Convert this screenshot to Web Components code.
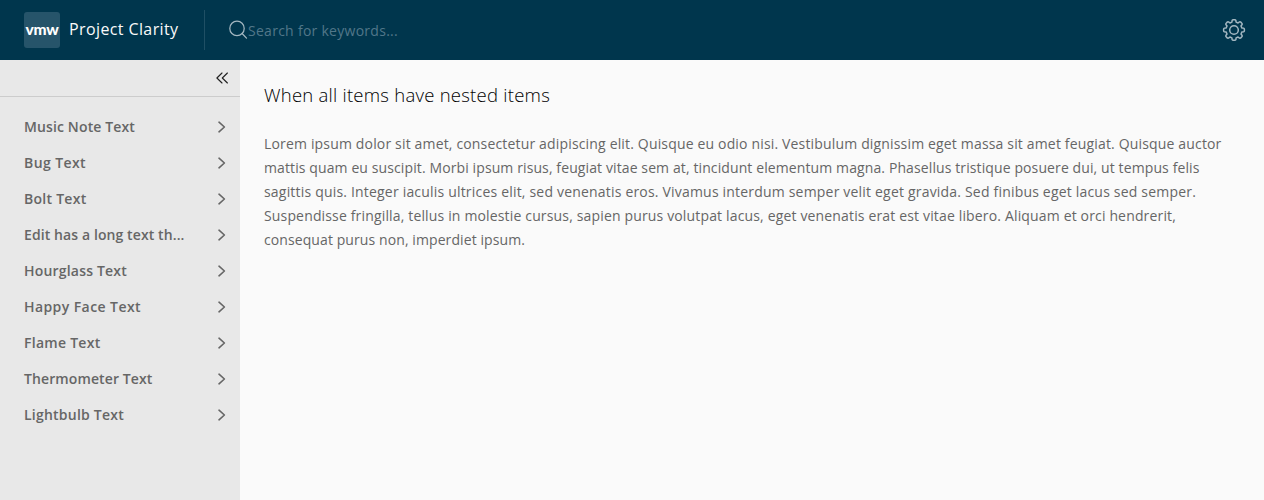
<!DOCTYPE html>
<html lang="en"><head><meta charset="utf-8"><title>Project Clarity</title>
<style>html,body{margin:0;height:100%;overflow:hidden}body{font-family:"Open Sans",sans-serif}</style></head>
<body>
<clr-shell></clr-shell>
<script>
const define=(name,html,setup)=>customElements.define(name,class extends HTMLElement{
  connectedCallback(){if(this.shadowRoot)return;this.attachShadow({mode:'open'}).innerHTML=html;if(setup)setup.call(this,this.shadowRoot);}
});
/* One line of text, tracked so that it spans a set measure. */
define('fit-line',`<style>:host{display:block;white-space:pre}span{display:inline-block}</style><span><slot></slot></span>`,function(root){
  const s=root.querySelector('span'),n=this.textContent.length;
  s.style.letterSpacing=((+this.getAttribute('measure')-s.getBoundingClientRect().width)/n)+'px';
});
define('clr-header',`<style>
:host{display:flex;height:60px;background:#00364d;color:#fafafa;align-items:center;flex:none}
.brand{display:flex;align-items:center;width:204px;box-sizing:border-box;padding-left:24px;gap:9px}
.logo{width:36px;height:36px;border-radius:3px;background:#26546a;display:flex;align-items:center;justify-content:center;font:900 15.5px/36px Lato,sans-serif;color:#fff}
.logo fit-line{margin-top:-2px}
.title{font-size:16px;line-height:24px;margin-top:-2px}
.search{display:flex;align-items:center;flex:1;border-left:1px solid #1f4f64;height:40px;padding-left:23px}
.search svg{margin-right:-1px}
.search fit-line{font-size:14px;line-height:24px;color:#527789;margin-top:2px}
.cog{margin-right:18px}svg{display:block;flex:none}
</style>
<div class="brand"><div class="logo"><fit-line measure="33">vmw</fit-line></div><fit-line class="title" measure="109.5">Project Clarity</fit-line></div>
<div class="search"><svg width="21" height="24" viewBox="0 0 21 24" fill="none" stroke="#a3b7c1" stroke-width="1.25"><circle cx="9" cy="10.4" r="7.2"/><path d="M14.1 15.5l4.4 4.6" stroke-linecap="round"/></svg><fit-line measure="150">Search for keywords...</fit-line></div>
<svg class="cog" width="24" height="24" viewBox="-12 -12 24 24" fill="none" stroke="#a3b7c1" stroke-width="1.5"><circle r="4.3"/><path id="cog" stroke-linejoin="round"/></svg>`,function(root){
  /* Eight rounded teeth joined by short valleys. */
  let d='';
  for(let i=0;i<8;i++){
    const p=(r,deg)=>{const a=(i*45+deg)*Math.PI/180;return (r*Math.sin(a)).toFixed(2)+' '+(-r*Math.cos(a)).toFixed(2)};
    d+=(i?'L':'M')+p(8.1,-15)+'L'+p(9.8,-11)+'Q'+p(10.5,-8)+' '+p(10.4,-4)+'L'+p(10.4,4)+'Q'+p(10.5,8)+' '+p(9.8,11)+'L'+p(8.1,15);
  }
  root.getElementById('cog').setAttribute('d',d+'Z');
});
define('nav-item',`<style>:host{display:flex;height:36px;align-items:center;justify-content:space-between;padding:0 14px 0 24px;font-size:14px;font-weight:600;line-height:36px;color:#666}</style>
<slot></slot><svg width="9" height="12" viewBox="0 0 9 12" fill="none" stroke="#666" stroke-width="1.6"><path d="M2 1.2L7.4 6 2 10.8" stroke-linecap="round" stroke-linejoin="round"/></svg>`);
define('clr-sidenav',`<style>
:host{display:block;width:240px;background:#e8e8e8;flex:none}
.toggle{height:36px;border-bottom:1px solid #ccc;display:flex;align-items:center;justify-content:flex-end;padding-right:11px}
nav{padding-top:12px}</style>
<div class="toggle"><svg width="13" height="12" viewBox="0 0 13 12" fill="none" stroke="#222" stroke-width="1.15" stroke-linejoin="round" stroke-linecap="round"><path d="M6 1L.9 6 6 11M11.4 1L6.3 6l5.1 5"/></svg></div>
<nav></nav>`,function(root){
  root.querySelector('nav').innerHTML=[['Music Note Text',111],['Bug Text',62],['Bolt Text',62.5],['Edit has a long text th...',160.5],['Hourglass Text',103],['Happy Face Text',117],['Flame Text',76.5],['Thermometer Text',128.5],['Lightbulb Text',100]]
  .map(([t,w])=>`<nav-item><fit-line measure="${w}">${t}</fit-line></nav-item>`).join('');
});
define('clr-content',`<style>:host{display:block;flex:1;background:#fafafa;padding:23px 24px 0;color:#666;font-size:14px;line-height:24px}
h2{margin:0 0 25px;font-size:18.5px;line-height:24px;font-weight:350;color:#000}</style>
<h2><fit-line measure="286">When all items have nested items</fit-line></h2>
<fit-line measure="957.5">Lorem ipsum dolor sit amet, consectetur adipiscing elit. Quisque eu odio nisi. Vestibulum dignissim eget massa sit amet feugiat. Quisque auctor</fit-line>
<fit-line measure="935.5">mattis quam eu suscipit. Morbi ipsum risus, feugiat vitae sem at, tincidunt elementum magna. Phasellus tristique posuere dui, ut tempus felis</fit-line>
<fit-line measure="932">sagittis quis. Integer iaculis ultrices elit, sed venenatis eros. Vivamus interdum semper velit eget gravida. Sed finibus eget lacus sed semper.</fit-line>
<fit-line measure="912">Suspendisse fringilla, tellus in molestie cursus, sapien purus volutpat lacus, eget venenatis erat est vitae libero. Aliquam et orci hendrerit,</fit-line>
<fit-line measure="261">consequat purus non, imperdiet ipsum.</fit-line>`);
define('clr-shell',`<style>:host{display:flex;flex-direction:column;height:100vh}main{display:flex;flex:1;min-height:0}</style>
<clr-header></clr-header><main><clr-sidenav></clr-sidenav><clr-content></clr-content></main>`);
</script></body></html>
